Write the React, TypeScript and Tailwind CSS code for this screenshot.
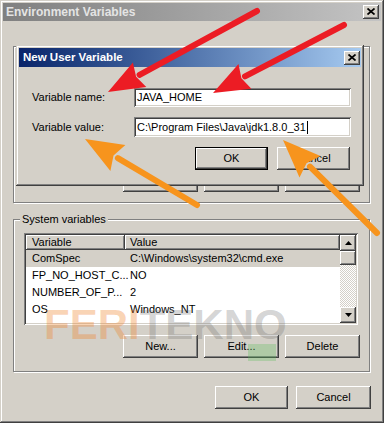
import React from "react";

const frame =
  "shadow-[inset_-1px_-1px_#404040,inset_1px_1px_#d4d0c8,inset_-2px_-2px_#808080,inset_2px_2px_#ffffff]";
const raised =
  "shadow-[inset_-1px_-1px_#404040,inset_1px_1px_#ffffff,inset_-2px_-2px_#808080,inset_2px_2px_#d4d0c8]";
const sunken =
  "shadow-[inset_1px_1px_#808080,inset_-1px_-1px_#ffffff,inset_2px_2px_#404040,inset_-2px_-2px_#d4d0c8]";
const etched =
  "border border-[#808080] shadow-[inset_1px_1px_0_#ffffff,1px_1px_0_#ffffff]";

function CloseBtn() {
  return (
    <div className={`flex items-center justify-center w-[16px] h-[14px] bg-[#d4d0c8] ${raised}`}>
      <svg width="8" height="7" viewBox="0 0 8 7" className="mb-[1px]">
        <path d="M0.5 0.5 L7.5 6.5 M7.5 0.5 L0.5 6.5" stroke="#000" strokeWidth="1.7" />
      </svg>
    </div>
  );
}

function Btn({ className, children, def }: { className: string; children: React.ReactNode; def?: boolean }) {
  return (
    <div
      className={`flex items-center justify-center h-[23px] bg-[#d4d0c8] ${raised} ${
        def ? "border border-black" : ""
      } ${className}`}
    >
      {children}
    </div>
  );
}

function ScrollBtn({ up }: { up?: boolean }) {
  return (
    <div className={`flex items-center justify-center w-[16px] h-[16px] bg-[#d4d0c8] ${raised}`}>
      <svg width="7" height="4" viewBox="0 0 7 4">
        {up ? <path d="M3.5 0 L7 4 L0 4 Z" fill="#000" /> : <path d="M0 0 L7 0 L3.5 4 Z" fill="#000" />}
      </svg>
    </div>
  );
}

const rows: [string, string][] = [
  ["ComSpec", "C:\\Windows\\system32\\cmd.exe"],
  ["FP_NO_HOST_C...", "NO"],
  ["NUMBER_OF_P...", "2"],
  ["OS", "Windows_NT"],
];

function Arrow({ tail, tip, head, notch, c1, c2, color }: any) {
  return (
    <g>
      <line x1={tail[0]} y1={tail[1]} x2={head[0]} y2={head[1]} stroke={color} strokeWidth="6" strokeLinecap="round" />
      <polygon points={`${tip[0]},${tip[1]} ${c1[0]},${c1[1]} ${notch[0]},${notch[1]} ${c2[0]},${c2[1]}`} fill={color} />
    </g>
  );
}

export default function App() {
  return (
    <div className="relative w-[384px] h-[423px] overflow-hidden bg-[#d4d0c8] font-['Liberation_Sans',Arial,sans-serif] text-[11px] text-black">
      {/* Environment Variables window */}
      <div className={`flex flex-col w-[384px] h-[423px] p-[3px] bg-[#d4d0c8] ${frame}`}>
        <div className="flex items-center justify-between h-[18px] shrink-0 bg-gradient-to-r from-[#808080] to-[#c4c4c4] pl-[3px] pr-[2px]">
          <span className="font-bold text-[12px] text-[#e4e4e4] leading-none">Environment Variables</span>
          <CloseBtn />
        </div>

        <div className="flex flex-col flex-1">
          {/* User variables group (behind dialog) */}
          <div className={`ml-[10px] mt-[25px] w-[357px] h-[157px] flex flex-col justify-end pb-[10px] pr-[9px] ${etched}`}>
            <div className="flex justify-end gap-[6px]">
              <Btn className="w-[75px]">New...</Btn>
              <Btn className="w-[75px]">Edit...</Btn>
              <Btn className="w-[75px]">Delete</Btn>
            </div>
          </div>

          {/* System variables group */}
          <div className={`relative ml-[10px] mt-[16px] w-[357px] h-[153px] flex flex-col pl-[10px] pt-[13px] pr-[9px] ${etched}`}>
            <span className="absolute left-[6px] -top-[7px] px-[2px] leading-[13px] bg-[#d4d0c8]">System variables</span>
            <div className={`w-[334px] h-[92px] p-[2px] bg-white flex ${sunken}`}>
              <div className="flex flex-col flex-1 overflow-hidden">
                <div className="flex h-[15px] shrink-0">
                  <div className={`w-[99px] h-full flex items-center pl-[6px] bg-[#d4d0c8] ${raised}`}>Variable</div>
                  <div className={`flex-1 h-full flex items-center pl-[5px] bg-[#d4d0c8] ${raised}`}>Value</div>
                </div>
                {rows.map(([k, v], i) => (
                  <div key={k} className={`flex h-[17px] shrink-0 items-center ${i === 0 ? "bg-[#d4d0c8]" : ""}`}>
                    <div className="w-[99px] pl-[6px] whitespace-nowrap">{k}</div>
                    <div className="flex-1 pl-[5px] whitespace-nowrap">{v}</div>
                  </div>
                ))}
              </div>
              <div className="flex flex-col w-[16px] h-full">
                <ScrollBtn up />
                <div className={`w-[16px] h-[14px] bg-[#d4d0c8] ${raised}`} />
                <div className="flex-1 bg-[repeating-conic-gradient(#d4d0c8_0_25%,#ffffff_0_50%)] bg-[length:2px_2px]" />
                <ScrollBtn />
              </div>
            </div>
            <div className="flex justify-end gap-[6px] mt-[10px]">
              <Btn className="w-[75px]">New...</Btn>
              <Btn className="w-[75px]">Edit...</Btn>
              <Btn className="w-[75px]">Delete</Btn>
            </div>
          </div>

          <div className="flex justify-end gap-[8px] mt-[14px] pr-[10px]">
            <Btn className="w-[73px]">OK</Btn>
            <Btn className="w-[75px]">Cancel</Btn>
          </div>
        </div>
      </div>

      {/* New User Variable dialog */}
      <div className={`absolute left-[16px] top-[45px] w-[348px] h-[141px] p-[3px] bg-[#d4d0c8] flex flex-col ${frame}`}>
        <div className="flex items-center justify-between h-[19px] shrink-0 bg-gradient-to-r from-[#0a246a] to-[#a6caf0] pl-[4px] pr-[1px]">
          <span className="font-bold text-[11.5px] text-white leading-none">New User Variable</span>
          <CloseBtn />
        </div>
        <div className="flex flex-col pl-[13px] pt-[21px]">
          <div className="flex items-center h-[19px]">
            <span className="w-[102px]">Variable name:</span>
            <div className={`w-[217px] h-[19px] bg-white flex items-center pl-[3px] ${sunken}`}>JAVA_HOME</div>
          </div>
          <div className="flex items-center h-[20px] mt-[10px]">
            <span className="w-[102px]">Variable value:</span>
            <div className={`w-[217px] h-[20px] bg-white flex items-center pl-[3px] ${sunken}`}>
              <span>C:\Program Files\Java\jdk1.8.0_31</span>
              <span className="w-[1px] h-[13px] bg-black ml-[1px]" />
            </div>
          </div>
          <div className="flex justify-end gap-[9px] mt-[10px] mr-[11px]">
            <Btn className="w-[73px]" def>
              OK
            </Btn>
            <Btn className="w-[73px]">Cancel</Btn>
          </div>
        </div>
      </div>

      {/* watermark */}
      <div className="absolute left-[44px] top-[304px] text-[42px] font-bold leading-none whitespace-nowrap pointer-events-none">
        <span className="text-[rgba(240,130,40,0.34)]">FERI</span>
        <span className="text-[rgba(110,110,110,0.3)]">TEKNO</span>
      </div>
      <div className="absolute left-[248px] top-[344px] w-[28px] h-[17px] bg-[rgba(90,190,90,0.3)] pointer-events-none" />

      {/* annotation arrows */}
      <svg className="absolute left-0 top-0 pointer-events-none" width="384" height="423" viewBox="0 0 384 423">
        <Arrow color="#ec1c24" tail={[257, 11]} head={[139.6, 74.8]} tip={[108, 92]} c1={[146.3, 87.1]} notch={[136.1, 76.7]} c2={[132.9, 62.5]} />
        <Arrow color="#ec1c24" tail={[344, 25]} head={[245, 76.4]} tip={[213, 93]} c1={[251.4, 88.8]} notch={[241.4, 78.3]} c2={[238.5, 64.0]} />
        <Arrow color="#f7941d" tail={[197, 205]} head={[117.9, 158.1]} tip={[85, 139]} c1={[110.4, 171.1]} notch={[113.5, 155.6]} c2={[125.4, 145.1]} />
        <Arrow color="#f7941d" tail={[377, 233]} head={[310, 166.7]} tip={[283, 140]} c1={[299.5, 177.4]} notch={[306.5, 163.2]} c2={[320.5, 156.0]} />
      </svg>
    </div>
  );
}
